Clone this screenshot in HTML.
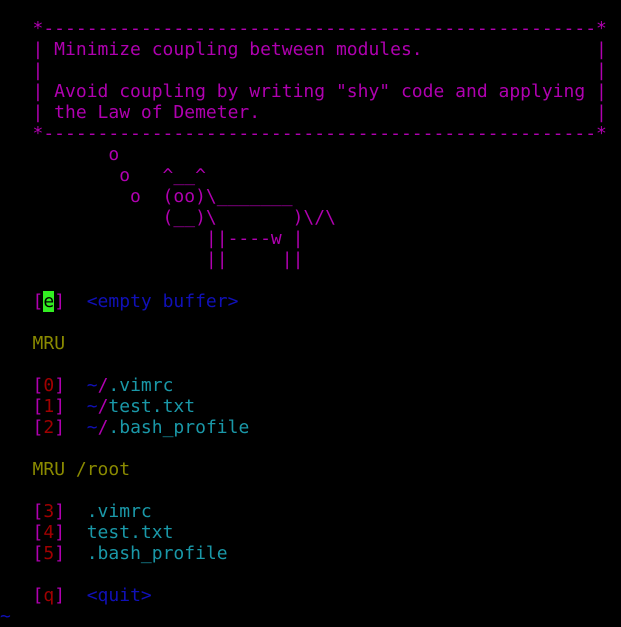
<!DOCTYPE html>
<html><head><style>
html,body{margin:0;background:#000;width:621px;height:623px;overflow:hidden}
pre{position:absolute;left:0;top:18px;margin:0;font-family:"DejaVu Sans Mono","Liberation Mono",monospace;font-size:18px;line-height:21px;color:#b000b0;white-space:pre}
.b{color:#1010b8}.t{color:#1a98a8}.y{color:#8a8a00}.r{color:#a00000}.c{background:#33ee22;color:#000}
</style></head><body><pre>   *---------------------------------------------------*
   | Minimize coupling between modules.                |
   |                                                   |
   | Avoid coupling by writing "shy" code and applying |
   | the Law of Demeter.                               |
   *---------------------------------------------------*
          o
           o   ^__^
            o  (oo)\_______
               (__)\       )\/\
                   ||----w |
                   ||     ||

   [<span class="c">e</span>]  <span class="b">&lt;empty buffer&gt;</span>

   <span class="y">MRU</span>

   [<span class="r">0</span>]  <span class="b">~</span>/<span class="t">.vimrc</span>
   [<span class="r">1</span>]  <span class="b">~</span>/<span class="t">test.txt</span>
   [<span class="r">2</span>]  <span class="b">~</span>/<span class="t">.bash_profile</span>

   <span class="y">MRU /root</span>

   [<span class="r">3</span>]  <span class="t">.vimrc</span>
   [<span class="r">4</span>]  <span class="t">test.txt</span>
   [<span class="r">5</span>]  <span class="t">.bash_profile</span>

   [<span class="r">q</span>]  <span class="b">&lt;quit&gt;</span>
<span class="b">~</span>
</pre></body></html>
